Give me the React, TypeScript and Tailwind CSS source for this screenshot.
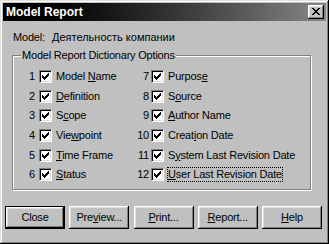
import type { ReactNode } from 'react';

const font = { fontFamily: '"Liberation Sans", Arial, sans-serif' };

const items: { n: number; label: ReactNode; focus?: boolean }[] = [
  { n: 1, label: <>Model <u>N</u>ame</> },
  { n: 7, label: <>Purpos<u>e</u></> },
  { n: 2, label: <><u>D</u>efinition</> },
  { n: 8, label: <>S<u>o</u>urce</> },
  { n: 3, label: <>S<u>c</u>ope</> },
  { n: 9, label: <><u>A</u>uthor Name</> },
  { n: 4, label: <>Vie<u>w</u>point</> },
  { n: 10, label: <>Creat<u>i</u>on Date</> },
  { n: 5, label: <><u>T</u>ime Frame</> },
  { n: 11, label: <>S<u>y</u>stem Last Revision Date</> },
  { n: 6, label: <><u>S</u>tatus</> },
  { n: 12, label: <><u>U</u>ser Last Revision Date</>, focus: true },
];

const checkCols = [
  [2, 4],
  [3, 5],
  [4, 6],
  [3, 5],
  [2, 4],
  [1, 3],
  [0, 2],
];

function Checkbox() {
  return (
    <div className="relative h-[13px] w-[13px] shrink-0 border border-[#808080] border-r-white border-b-white bg-white shadow-[inset_1px_1px_#000,inset_-1px_-1px_#dfdfdf]">
      <svg width="7" height="7" viewBox="0 0 7 7" className="absolute left-[2px] top-[2px]" shapeRendering="crispEdges">
        {checkCols.map(([a, b], x) => (
          <rect key={x} x={x} y={a} width="1" height={b - a + 1} fill="#000" />
        ))}
      </svg>
    </div>
  );
}

function Button({ children, isDefault }: { children: ReactNode; isDefault?: boolean }) {
  return (
    <div
      className={`flex h-[23px] w-[60px] items-center justify-center bg-[#c0c0c0] text-[11px] text-black ${
        isDefault
          ? 'border border-black shadow-[inset_-1px_-1px_#000,inset_1px_1px_#fff,inset_-2px_-2px_#808080,inset_2px_2px_#dfdfdf]'
          : 'shadow-[inset_-1px_-1px_#000,inset_1px_1px_#fff,inset_-2px_-2px_#808080,inset_2px_2px_#dfdfdf]'
      }`}
    >
      {children}
    </div>
  );
}

export default function App() {
  return (
    <div
      className="h-[244px] w-[329px] bg-[#c0c0c0] p-[3px] text-black shadow-[inset_-1px_-1px_#000,inset_1px_1px_#dfdfdf,inset_-2px_-2px_#808080,inset_2px_2px_#fff]"
      style={font}
    >
      <div className="flex h-[18px] items-center justify-between bg-gradient-to-r from-black to-[#888888] pl-[3px] pr-[2px]">
        <span className="text-[12px] font-bold leading-none text-white">Model Report</span>
        <div className="relative h-[14px] w-[16px] bg-[#c0c0c0] shadow-[inset_-1px_-1px_#000,inset_1px_1px_#fff,inset_-2px_-2px_#808080,inset_2px_2px_#dfdfdf]">
          <svg width="8" height="7" viewBox="0 0 8 7" className="absolute left-[4px] top-[3px]" shapeRendering="crispEdges">
            <path d="M0 0h2v1H0zM6 0h2v1H6zM1 1h2v1H1zM5 1h2v1H5zM2 2h4v1H2zM3 3h2v1H3zM2 4h4v1H2zM1 5h2v1H1zM5 5h2v1H5zM0 6h2v1H0zM6 6h2v1H6z" fill="#000" />
          </svg>
        </div>
      </div>

      <div className="mt-[10px] flex h-[13px] items-center pl-[10px] text-[11px] leading-[13px]">
        <span className="w-[39px] tracking-[-0.2px]">Model:</span>
        <span>Деятельность компании</span>
      </div>

      <div className="relative ml-[9px] mt-[11px] h-[135px] w-[299px] border border-[#808080] pt-[11px] shadow-[1px_1px_#fff,inset_1px_1px_#fff]">
        <span className="absolute left-[8px] top-[-7px] bg-[#c0c0c0] px-[1px] text-[11px] leading-[13px] tracking-[-0.2px]">
          Model Report Dictionary Options
        </span>
        <div className="grid grid-cols-[114px_1fr] text-[11px] leading-[13px] tracking-[-0.2px]">
          {items.map((it) => {
            const right = it.n > 6;
            return (
              <div key={it.n} className="flex h-[19.6px] items-center">
                <span className="w-[22px] text-right">{it.n}</span>
                <div className={right ? 'ml-[2px]' : 'ml-[4px]'}>
                  <Checkbox />
                </div>
                <span
                  className={`ml-[3px] border ${
                    it.focus ? 'border-dotted border-black' : 'border-transparent'
                  }`}
                >
                  {it.label}
                </span>
              </div>
            );
          })}
        </div>
      </div>

      <div className="ml-[2px] mr-[4px] mt-[16px] flex justify-between tracking-[-0.2px]">
        <Button isDefault>Close</Button>
        <Button>
          Pre<u>v</u>iew...
        </Button>
        <Button>
          <u>P</u>rint...
        </Button>
        <Button>
          <u>R</u>eport...
        </Button>
        <Button>
          <u>H</u>elp
        </Button>
      </div>
    </div>
  );
}
